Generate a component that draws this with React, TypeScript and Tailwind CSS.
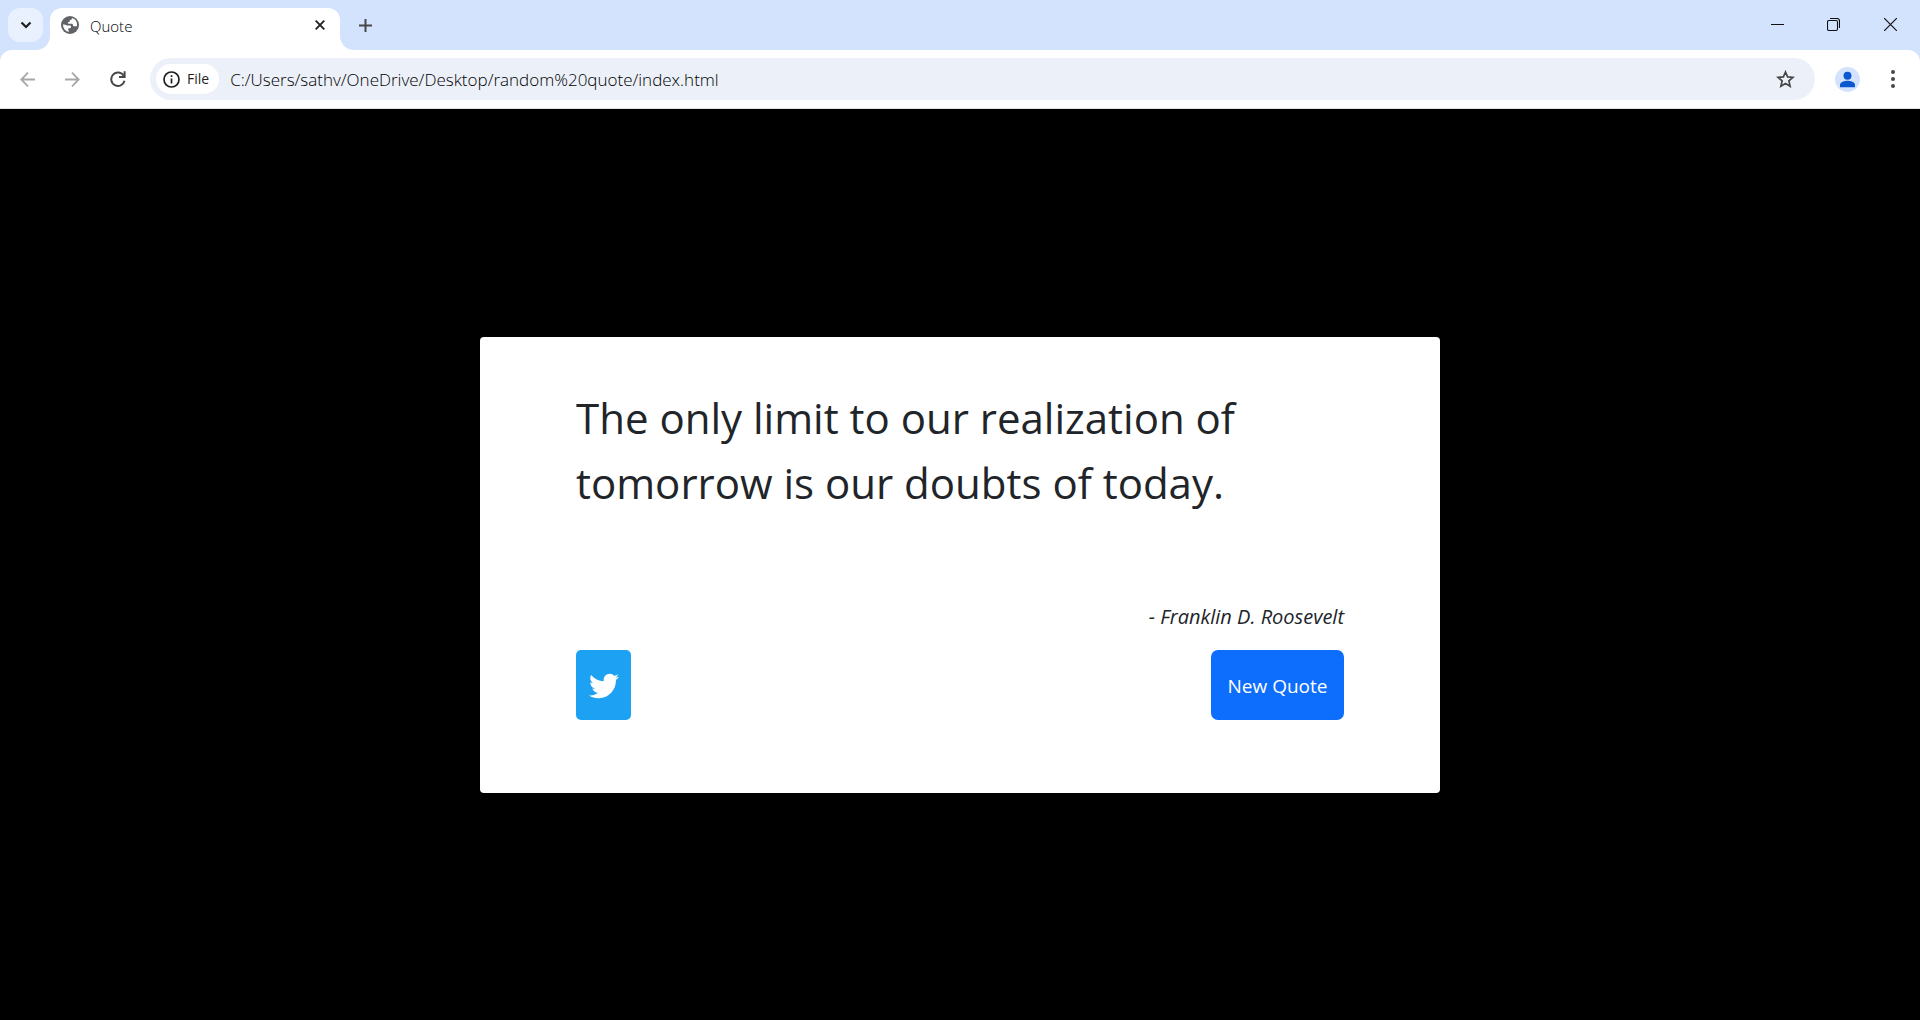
import { useState } from "react";

function Flare({ side }: { side: "left" | "right" }) {
  return (
    <svg
      viewBox="0 0 14 14"
      aria-hidden="true"
      className={
        side === "left"
          ? "absolute bottom-0 -left-[14px] size-[14px] fill-white"
          : "absolute bottom-0 -right-[14px] size-[14px] fill-white"
      }
    >
      <path d={side === "left" ? "M14 0v14H0A14 14 0 0 0 14 0z" : "M0 0v14h14A14 14 0 0 1 0 0z"} />
    </svg>
  );
}

function TabStrip() {
  return (
    <header className="flex h-[50px] items-stretch bg-[#d3e3fd] pl-2 text-[#1f1f1f]">
      <button
        aria-label="Search tabs"
        className="mt-2 flex h-[34px] w-[35px] items-center justify-center rounded-xl bg-[#e9f1fe]"
      >
        <svg viewBox="0 0 12 8" className="h-2 w-3" fill="none" stroke="currentColor" strokeWidth="2.2">
          <path d="M1.5 1.5 6 6l4.5-4.5" />
        </svg>
      </button>
      <div className="relative ml-[7px] mt-2 flex w-[290px] items-center rounded-t-xl bg-white pb-2 pl-[11px] pr-3">
        <Flare side="left" />
        <svg viewBox="0 0 18 18" className="size-[18px]" aria-hidden="true">
          <circle cx="9" cy="9" r="9" fill="#5f6368" />
          <path
            d="M10.9 1.9c.2.9-.2 1.7-1.2 1.9-.9.2-.9.5-.9 1.200 0 .7-.5 1-1.300 1-.5 0-.6.3-.6.8 0 .6.400.9 1 .9h2.600c1 0 1.500.6 1.500 1.500 0 .8.400 1 1.100 1h2.800a7 7 0 0 0 .1-1.200 7.100 7.100 0 0 0-5.100-7.100zM2.100 8.300a7 7 0 0 0 5.600 7.600v-1.200c0-.9-.3-1.100-1-1.500.3-.5 1-.8 1.900-.9 1-.1 1.500-.6 1.500-1.500 0-.8-.6-1.200-1.500-1.200H6.500c-.6 0-1-.3-1.400-.700z"
            fill="#fff"
          />
        </svg>
        <span className="ml-[11px] grow pt-px font-['Open_Sans',sans-serif] text-[15px] font-light leading-5 text-black">Quote</span>
        <button aria-label="Close tab" className="flex size-4 items-center justify-center">
          <svg viewBox="0 0 10 10" className="size-[10px]" stroke="currentColor" strokeWidth="1.800">
            <path d="M.7.700l8.600 8.600M9.300.700.7 9.300" />
          </svg>
        </button>
        <Flare side="right" />
      </div>
      <button aria-label="New tab" className="ml-[17px] flex w-4 items-center justify-center text-[#474747]">
        <svg viewBox="0 0 13 13" className="size-[13px]" stroke="currentColor" strokeWidth="2">
          <path d="M6.500 0v13M0 6.500h13" />
        </svg>
      </button>
      <div className="ml-auto flex pb-px text-[#111]">
        <button aria-label="Minimize" className="flex w-14 items-center justify-center">
          <svg viewBox="0 0 13 13" className="size-[13px]" stroke="currentColor">
            <path d="M0 6.500h13" />
          </svg>
        </button>
        <button aria-label="Restore" className="flex w-14 items-center justify-center">
          <svg viewBox="0 0 13 13" className="size-[13px]" fill="none" stroke="currentColor" strokeWidth="1.100">
            <rect x=".5" y="2.500" width="10" height="10" rx="1.500" />
            <path d="M3 .5h7a2.500 2.500 0 0 1 2.500 2.500v7" />
          </svg>
        </button>
        <button aria-label="Close" className="flex w-[59px] items-center justify-center">
          <svg viewBox="0 0 13 13" className="size-[13px]" stroke="currentColor" strokeWidth="1.200">
            <path d="m0 0 13 13M13 0 0 13" />
          </svg>
        </button>
      </div>
    </header>
  );
}

function Toolbar() {
  const [url, setUrl] = useState("C:/Users/sathv/OneDrive/Desktop/random%20quote/index.html");
  return (
    <div className="bg-[#d3e3fd]">
      <nav className="flex h-[59px] items-center rounded-t-xl border-b border-[#dfe3e3] bg-white pl-5 pr-[22px] text-[#474747]">
        <button aria-label="Back" className="text-[#a8a8a8]">
          <svg viewBox="0 0 15 15" className="size-[15px]" fill="none" stroke="currentColor" strokeWidth="1.800">
            <path d="M15 7.500H1.300M8 .7 1.300 7.500 8 14.300" />
          </svg>
        </button>
        <button aria-label="Forward" className="ml-[30px] text-[#a8a8a8]">
          <svg viewBox="0 0 15 15" className="size-[15px]" fill="none" stroke="currentColor" strokeWidth="1.800">
            <path d="M0 7.500h13.700M7 .7l6.700 6.800L7 14.300" />
          </svg>
        </button>
        <button aria-label="Reload" className="ml-[30px]">
          <svg viewBox="0 0 16 16" className="size-4" fill="none" stroke="currentColor" strokeWidth="2">
            <path d="M13.700 4.800A6.700 6.700 0 1 0 14.500 9.700" />
            <path d="M14.600.3v5.700H9" />
          </svg>
        </button>
        <div className="ml-6 flex h-[42px] grow items-center rounded-full bg-[#ecf0f9] pl-1.5 pr-5">
          <button className="flex h-[30px] items-center gap-[7px] rounded-full bg-white pl-[7px] pr-2.5 font-['Open_Sans',sans-serif] text-[14px] leading-5 text-[#1f1f1f]">
            <svg viewBox="0 0 17 17" className="size-[17px]" fill="none" stroke="currentColor" strokeWidth="1.700">
              <circle cx="8.500" cy="8.500" r="7.500" />
              <path d="M8.500 7.500v5M8.500 4.300v1.700" />
            </svg>
            File
          </button>
          <input
            aria-label="Address"
            value={url}
            onChange={(e) => setUrl(e.target.value)}
            className="ml-[11px] min-w-0 grow bg-transparent pt-px font-['Open_Sans',sans-serif] text-[17px] font-light leading-6 text-black outline-none"
          />
          <button aria-label="Bookmark this page">
            <svg viewBox="0 0 19 18" className="h-[18px] w-[19px]" fill="none" stroke="currentColor" strokeWidth="1.700">
              <path d="m9.500 2 2.100 4.900 5.300.5-4 3.500 1.200 5.300-4.600-2.800-4.600 2.800 1.200-5.300-4-3.500 5.300-.5z" />
            </svg>
          </button>
        </div>
        <button aria-label="Profile" className="ml-5 size-[25px] rounded-full bg-[#d3e3fd]">
          <svg viewBox="0 0 25 25" className="size-[25px]" fill="#0b57d0">
            <circle cx="12.500" cy="8.800" r="4" />
            <path d="M5 20.200v-2.400c0-2.600 4.800-4 7.500-4s7.500 1.400 7.500 4v2.400z" />
          </svg>
        </button>
        <button aria-label="Menu" className="ml-[28px] flex w-[10px] justify-center">
          <svg viewBox="0 0 4 18" className="h-[18px] w-1" fill="currentColor">
            <circle cx="2" cy="2" r="2" />
            <circle cx="2" cy="9" r="2" />
            <circle cx="2" cy="16" r="2" />
          </svg>
        </button>
      </nav>
    </div>
  );
}

const quotes = [
  { text: "The only limit to our realization of tomorrow is our doubts of today.", author: "Franklin D. Roosevelt" },
  { text: "Well done is better than well said.", author: "Benjamin Franklin" },
];

function QuoteCard() {
  const [index, setIndex] = useState(0);
  const quote = quotes[index];
  return (
    <section className="w-1/2 rounded-[4px] bg-white px-24 pb-[73px] pt-12 font-['Open_Sans',sans-serif] text-[#212529]">
      <p className="min-h-[216px] text-[42px] leading-[65px]">{quote.text}</p>
      <p className="mb-[17px] text-right text-[20px] italic leading-8">- {quote.author}</p>
      <div className="flex justify-between">
        <a
          href="#tweet"
          aria-label="Tweet this quote"
          className="flex h-[70px] w-[55px] items-center justify-center rounded-[5px] bg-[#1da1f2] pt-0.5"
        >
          <svg viewBox="0 0 512 512" className="size-[30px]" fill="#fff">
            <path d="M459.370 151.716c.325 4.548.325 9.097.325 13.645 0 138.720-105.583 298.558-298.558 298.558-59.452 0-114.680-17.219-161.137-47.106 8.447.974 16.568 1.299 25.340 1.299 49.055 0 94.213-16.568 130.274-44.832-46.132-.975-84.792-31.188-98.112-72.772 6.498.974 12.995 1.624 19.818 1.624 9.421 0 18.843-1.300 27.614-3.573-48.081-9.747-84.143-51.980-84.143-102.985v-1.299c13.969 7.797 30.214 12.670 47.431 13.319-28.264-18.843-46.781-51.005-46.781-87.391 0-19.492 5.197-37.360 14.294-52.954 51.655 63.675 129.300 105.258 216.365 109.807-1.624-7.797-2.599-15.918-2.599-24.040 0-57.828 46.782-104.934 104.934-104.934 30.213 0 57.502 12.670 76.670 33.137 23.715-4.548 46.456-13.320 66.599-25.340-7.798 24.366-24.366 44.833-46.132 57.827 21.117-2.273 41.584-8.122 60.426-16.243-14.292 20.791-32.161 39.308-52.628 54.253z" />
          </svg>
        </a>
        <button
          onClick={() => setIndex((index + 1) % quotes.length)}
          className="h-[70px] w-[133px] rounded-[7px] bg-[#0d6efd] pt-1 text-[19px] text-white"
        >
          New Quote
        </button>
      </div>
    </section>
  );
}

export default function App() {
  return (
    <div className="flex min-h-screen flex-col">
      <TabStrip />
      <Toolbar />
      <main className="flex grow items-center justify-center bg-black">
        <QuoteCard />
      </main>
    </div>
  );
}
